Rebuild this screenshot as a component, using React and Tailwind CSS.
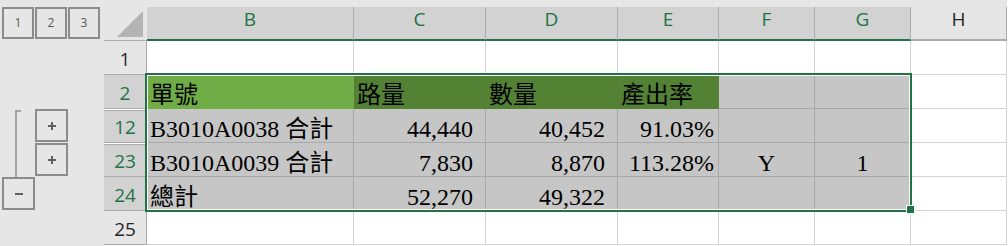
import React from "react";

const COLS = ["w-[207px]", "w-[132px]", "w-[132px]", "w-[101px]", "w-[96px]", "w-[96px]", "w-[96px]"];

const HEAD = [
  { l: "B", sel: true },
  { l: "C", sel: true },
  { l: "D", sel: true },
  { l: "E", sel: true },
  { l: "F", sel: true },
  { l: "G", sel: true },
  { l: "H", sel: false },
];

const KIND = {
  white: "bg-white border-[#d4d4d4]",
  gray: "bg-[#c6c6c6] border-[#a8a8a8]",
  lg: "bg-[#70ad47] border-[#70ad47] text-[#ececec]",
  dg: "bg-[#548235] border-[#548235] text-[#ececec]",
};

const ALIGN = {
  l: "justify-start pl-[3px]",
  r: "justify-end pr-[12px]",
  e: "justify-end pr-[4px]",
  c: "justify-center",
};

const W = { k: "white" };
const G = { k: "gray" };

const ROWS = [
  { n: "1", sel: false, cells: [W, W, W, W, W, W, W] },
  {
    n: "2",
    sel: true,
    cells: [
      { k: "lg", t: "單號", a: "l" },
      { k: "dg", t: "路量", a: "l" },
      { k: "dg", t: "數量", a: "l" },
      { k: "dg", t: "產出率", a: "l" },
      G,
      G,
      W,
    ],
  },
  {
    n: "12",
    sel: true,
    gap: true,
    cells: [
      { k: "gray", t: "B3010A0038 合計", a: "l" },
      { k: "gray", t: "44,440", a: "r" },
      { k: "gray", t: "40,452", a: "r" },
      { k: "gray", t: "91.03%", a: "e" },
      G,
      G,
      W,
    ],
  },
  {
    n: "23",
    sel: true,
    gap: true,
    cells: [
      { k: "gray", t: "B3010A0039 合計", a: "l" },
      { k: "gray", t: "7,830", a: "r" },
      { k: "gray", t: "8,870", a: "r" },
      { k: "gray", t: "113.28%", a: "e" },
      { k: "gray", t: "Y", a: "c" },
      { k: "gray", t: "1", a: "c" },
      W,
    ],
  },
  {
    n: "24",
    sel: true,
    cells: [
      { k: "gray", t: "總計", a: "l" },
      { k: "gray", t: "52,270", a: "r" },
      { k: "gray", t: "49,322", a: "r" },
      G,
      G,
      G,
      W,
    ],
  },
  { n: "25", sel: false, cells: [W, W, W, W, W, W, W] },
];

function OutlineButton({ children, size = "w-[32px] h-[32px]" }) {
  return (
    <div className={`flex ${size} items-center justify-center border-2 border-[#8c8c8c] bg-[#e6e6e6] text-[12px] text-[#595959]`}>
      {children}
    </div>
  );
}

function Plus() {
  return (
    <svg width="8" height="8" viewBox="0 0 8 8">
      <path d="M4 0v8M0 4h8" stroke="#5f5f5f" strokeWidth="2" />
    </svg>
  );
}

function Minus() {
  return (
    <svg width="8" height="8" viewBox="0 0 8 8">
      <path d="M0 4h8" stroke="#5f5f5f" strokeWidth="2" />
    </svg>
  );
}

export default function App() {
  return (
    <div className="relative flex h-[246px] w-[1008px] overflow-hidden bg-white font-['Open_Sans',sans-serif]">
      {/* outline gutter */}
      <div className="flex w-[104px] shrink-0 flex-col bg-[#e6e6e6]">
        <div className="h-[7px]" />
        <div className="flex gap-px pl-[2px]">
          <OutlineButton>1</OutlineButton>
          <OutlineButton>2</OutlineButton>
          <OutlineButton>3</OutlineButton>
        </div>
        <div className="mt-[70px] flex">
          <div className="w-[35px] pl-[15px] pt-px">
            <div className="h-[67px] w-[6px] border-l-2 border-t-2 border-[#a3a3a3]" />
          </div>
          <div className="flex flex-col gap-px">
            <OutlineButton size="w-[33px] h-[33px]">
              <Plus />
            </OutlineButton>
            <OutlineButton size="w-[33px] h-[33px]">
              <Plus />
            </OutlineButton>
          </div>
        </div>
        <div className="pl-[2px]">
          <OutlineButton size="w-[33px] h-[33px]">
            <Minus />
          </OutlineButton>
        </div>
      </div>

      {/* sheet */}
      <div className="flex flex-col">
        <div className="h-[7px] bg-[#e6e6e6]" />
        <div className="flex h-[34px]">
          <div className="flex w-[43px] shrink-0 items-start justify-end border-b border-[#ababab] bg-[#e6e6e6] pr-[4px] pt-[4px]">
            <svg width="26" height="26" viewBox="0 0 26 26">
              <polygon points="26,0 26,26 0,26" fill="#b4b4b4" />
            </svg>
          </div>
          {HEAD.map((h, i) => (
            <div
              key={h.l}
              className={`flex ${COLS[i]} shrink-0 items-end justify-center border-r border-b-2 border-r-[#ababab] pb-[10px] text-[19px] leading-[19px] ${
                h.sel ? "border-b-[#217346] bg-[#d2d2d2] text-[#217346]" : "border-b-[#ababab] bg-[#e6e6e6] text-[#262626]"
              }`}
            >
              {h.l}
            </div>
          ))}
        </div>

        {ROWS.map((row) => (
          <div key={row.n} className="flex h-[34px]">
            <div
              className={`flex w-[43px] shrink-0 items-end justify-center border-r border-b border-[#ababab] pb-[5px] text-[19px] leading-[19px] ${
                row.sel ? "bg-[#d2d2d2] text-[#217346]" : "bg-[#e6e6e6] text-[#262626]"
              } ${row.gap ? "shadow-[inset_0_1px_0_#fff,inset_0_2px_0_#ababab]" : ""}`}
            >
              {row.n}
            </div>
            {row.cells.map((c, i) => (
              <div
                key={i}
                className={`flex ${COLS[i]} shrink-0 items-end border-r border-b pb-px font-['Liberation_Serif','Noto_Sans_CJK_TC',serif] text-[24px] leading-[24px] whitespace-nowrap text-black ${KIND[c.k]} ${
                  ALIGN[c.a || "l"]
                }`}
              >
                {c.t}
              </div>
            ))}
          </div>
        ))}
      </div>

      {/* selection */}
      <div className="pointer-events-none absolute left-[145px] top-[73px] h-[139px] w-[767px] border-2 border-[#217346] shadow-[inset_0_0_0_1px_#fff]" />
      <div className="absolute left-[906px] top-[205px] h-[9px] w-[9px] border border-white bg-[#217346]" />
    </div>
  );
}
